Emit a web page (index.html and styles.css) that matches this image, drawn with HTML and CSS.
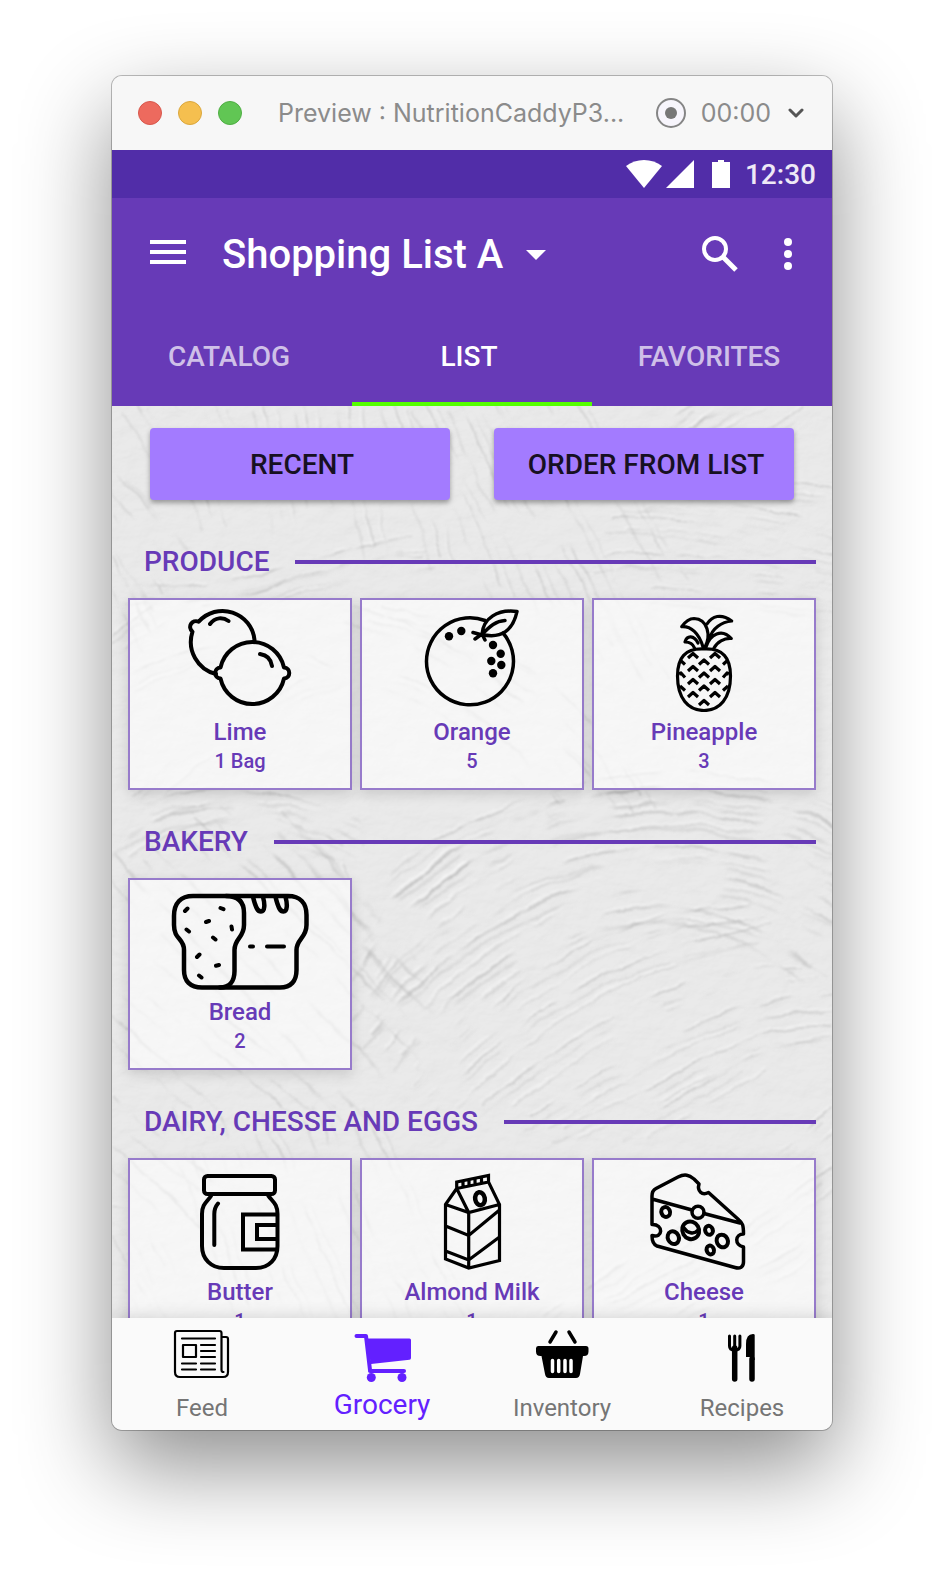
FILE: index.html
```html
<!DOCTYPE html>
<html lang="en">
<head>
<meta charset="utf-8">
<meta name="viewport" content="width=device-width, initial-scale=1">
<title>Preview : NutritionCaddyP3</title>
<link rel="stylesheet" href="styles.css">
</head>
<body>
<div class="window">
  <header class="titlebar">
    <div class="lights"><span class="light red"></span><span class="light amber"></span><span class="light green"></span></div>
    <span class="window-title">Preview : NutritionCaddyP3...</span>
    <button class="record" aria-label="Record"><span class="record-dot"></span></button>
    <span class="timer">00:00</span>
    <button class="plain" aria-label="More recording options"><svg width="16" height="12" viewBox="0 0 16 12" fill="none" stroke="#555" stroke-width="3" stroke-linecap="round" stroke-linejoin="round"><path d="M2 3l6 6 6-6"/></svg></button>
  </header>

  <div class="statusbar">
    <svg width="104" height="28" viewBox="0 0 104 28" fill="#fff"><path d="M0 6C10-2 26-2 36 6L18 28z"/><path d="M68 0v28H40z"/><path d="M92 0h6v2h6v26H86V2h6z"/></svg>
    <span>12:30</span>
  </div>

  <div class="appbar">
    <div class="toolbar">
      <button class="plain" aria-label="Menu"><svg width="36" height="28" viewBox="0 0 36 28" fill="#fff"><path d="M0 0h36v4H0zM0 10h36v4H0zM0 20h36v4H0z"/></svg></button>
      <h1 class="list-title"><button class="plain list-picker">Shopping List A<svg width="20" height="10" viewBox="0 0 20 10" fill="#fff"><path d="M0 0h20L10 10z"/></svg></button></h1>
      <button class="plain" aria-label="Search"><svg width="36" height="36" viewBox="0 0 36 36" fill="none" stroke="#fff" stroke-width="4"><circle cx="13" cy="13" r="11"/><path d="M21 21l13 13" stroke-width="5"/></svg></button>
      <button class="plain" aria-label="More options"><svg width="8" height="34" viewBox="0 0 8 34" fill="#fff"><circle cx="4" cy="5" r="4"/><circle cx="4" cy="17" r="4"/><circle cx="4" cy="29" r="4"/></svg></button>
    </div>
    <nav class="tabs">
      <a class="tab" href="#catalog">CATALOG</a>
      <a class="tab selected" href="#list" aria-current="page">LIST</a>
      <a class="tab" href="#favorites">FAVORITES</a>
    </nav>
  </div>

  <main class="content">
    <svg class="plaster" viewBox="0 0 720 912" preserveAspectRatio="xMidYMid slice" aria-hidden="true">
      <defs>
        <filter id="rough" x="-5%" y="-5%" width="110%" height="110%">
          <feTurbulence type="fractalNoise" baseFrequency=".03" numOctaves="4" seed="7" result="n"/>
          <feDisplacementMap in="SourceGraphic" in2="n" scale="9" xChannelSelector="R" yChannelSelector="G" result="d"/>
          <feTurbulence type="fractalNoise" baseFrequency=".02" numOctaves="3" seed="11"/>
          <feColorMatrix values="0 0 0 0 0  0 0 0 0 0  0 0 0 0 0  5 0 0 0 -2" result="m"/>
          <feComposite in="d" in2="m" operator="in"/>
          <feGaussianBlur stdDeviation=".9"/>
        </filter>
        <filter id="grain" x="0" y="0" width="100%" height="100%">
          <feTurbulence type="fractalNoise" baseFrequency=".04 .06" numOctaves="5" seed="3"/>
          <feDiffuseLighting surfaceScale="2" lighting-color="#fff" diffuseConstant="1.05"><feDistantLight azimuth="235" elevation="62"/></feDiffuseLighting>
        </filter>
        <g id="strokes">
          <path d="M20-10L70 70M60-10L100 110M100-10L130 60M150-10L172 120M190-10L205 90M235-10L262 140M280-10L330 150M310-10L390 180M345-10L440 200M380-10L500 240M400-10L540 260M430-10L470 60M460-10L560 160M590-10L500 60M640-10L540 40M690 0L600 60"/>
          <path d="M500 110C580 110 650 130 730 150M520 90C600 86 660 110 730 116M490 150C570 140 650 160 730 170M560 70C620 60 680 84 730 80M540 180C610 190 660 180 730 200"/>
          <path d="M0 60L60 130M0 110L50 190M0 150L40 230M20 180C110 190 190 150 300 130M90 200C150 190 220 150 310 150M0 230L40 200"/>
          <path d="M240 200C340 220 430 300 490 390M270 200C370 220 470 280 530 390M240 260C330 270 400 330 450 400M10 270C80 240 150 220 220 260M20 390C100 320 180 270 240 260"/>
          <path stroke-width="3" d="M250 560C340 420 560 350 740 460M250 600C360 450 560 390 740 490M260 630C370 490 570 400 740 530M260 520C350 400 560 330 740 430M290 650C390 520 560 440 700 560M0 440C80 380 150 400 230 440M0 420C60 370 150 370 260 420"/>
          <path d="M270 480C360 380 600 320 740 410M300 680C400 570 500 500 640 500M330 690C430 590 520 540 660 520M370 700C450 640 550 560 690 560M420 710C520 650 600 590 720 590M450 720C560 680 640 610 720 620M520 720L640 650"/>
          <path d="M80 410L320 640M110 400L310 600M140 400L300 570M170 405L290 540M40 440L280 680M0 450L240 700M0 520L210 690M0 560L170 700M230 460L270 520M0 610L90 690"/>
          <path d="M0 690L120 790M0 740L90 820M60 700L140 910M110 710L190 910M150 710L240 910M200 700L300 910M250 700L350 910M0 800C30 800 40 840 50 860M0 830L40 900M430 910C520 850 620 800 720 700M470 910C580 860 640 820 720 760M560 910C620 880 680 850 720 810"/>
        </g>
      </defs>
      <rect width="720" height="912" fill="#e7e7e7"/>
      <rect width="720" height="912" filter="url(#grain)" opacity=".15"/>
      <g filter="url(#rough)" fill="none" stroke-width="2">
        <g stroke="#fff" stroke-opacity=".35"><use href="#strokes" x="-2" y="-2"/><use href="#strokes" x="13" y="11"/></g>
        <g stroke="#aaa" stroke-opacity=".42"><use href="#strokes"/></g>
        <g stroke="#aaa" stroke-opacity=".26"><use href="#strokes" x="15" y="13"/><use href="#strokes" x="-9" y="16"/></g>
      </g>
    </svg>

    <div class="actions">
      <button class="action">RECENT</button>
      <button class="action">ORDER FROM LIST</button>
    </div>

    <section class="aisle">
      <h2 class="aisle-title">PRODUCE</h2>
      <div class="cards">
        <article class="card">
          <svg class="food" viewBox="0 0 140 104" stroke-width="4"><path d="M84.500 32A32 32 0 0 0 28.700 13.700C22 11 17 19 22.500 23.700A33 33 0 0 0 46 66M40 16C45 9 53 9 58.500 13M90 46C97 47 101 51 102 58"/><path d="M50.500 59.500A32.500 32.500 0 0 1 114 59.500C121 60 121 70 114 70.500A32.500 32.500 0 0 1 50.500 70.500C43.500 70 43.500 60 50.500 59.500z"/></svg>
          <h3 class="name">Lime</h3><p class="qty">1 Bag</p>
        </article>
        <article class="card">
          <svg class="food" viewBox="0 0 140 104" stroke-width="3.500"><path d="M83 12.500A43.500 43.500 0 1 0 101 25"/><path d="M80 26.500C81 10 96 1 115 3.500C111 22 100 31 80 26.500C88 18 94 13 103 12.500M71 24.500L82 27.500M73 31L80 26L83 32"/><g fill="#000" stroke="none"><circle cx="47" cy="28.300" r="4.200"/><circle cx="59.300" cy="23" r="4.200"/><circle cx="91" cy="37" r="4.200"/><circle cx="98.700" cy="45.700" r="4.200"/><circle cx="89.300" cy="53" r="4.200"/><circle cx="99.300" cy="57" r="4.200"/><circle cx="91" cy="65.300" r="4.200"/></g></svg>
          <h3 class="name">Orange</h3><p class="qty">5</p>
        </article>
        <article class="card">
          <svg class="food" viewBox="0 0 140 104" stroke-width="3.200"><path d="M70 41C89 40 96.500 50 96.500 68C96.500 90 86 102.500 70 102.500C54 102.500 43.500 90 43.500 68C43.500 50 51 40 70 41z"/><path d="M71 39C77 28 74 11 60 10.500C55 10.500 51 14 47.700 18.700C57 18 65 25 69 39M73 16C78 8 87 5 97.700 13C88 14 78 20 75.500 31M64 35C60 27 53 27 51 34C56 34 59 36 60.500 40M72 39C76 26 88 20 97.300 30.500C90 30 83 34 80 40"/><path stroke-linecap="butt" d="M54 50l5-4.500 5 4.500M76 50l5-4.500 5 4.500M46 52l5 4.500M65 56.500l5-4.500 5 4.500M94 52l-5 4.500M54 63l5-4.500 5 4.500M76 63l5-4.500 5 4.500M45 66l2-1 4 4.500M65 69.500l5-4.500 5 4.500M95 66l-2-1-4 4.500M54 76l5-4.500 5 4.500M76 76l5-4.500 5 4.500M46 78l5 4.500M65 82.500l5-4.500 5 4.500M94 78l-5 4.500M54 89l5-4.500 5 4.500M76 89l5-4.500 5 4.500M65 97l5-4.500 5 4.500"/></svg>
          <h3 class="name">Pineapple</h3><p class="qty">3</p>
        </article>
      </div>
    </section>

    <section class="aisle">
      <h2 class="aisle-title">BAKERY</h2>
      <div class="cards">
        <article class="card">
          <svg class="food" viewBox="0 0 140 104" stroke-width="4.500"><path d="M23 8H56C68 8 74 14 74 25V37C74 50 64.500 50 64.500 62V83C64.500 94 59 99.500 50 99.500H32C20 99.500 14 93 14 82V62C14 50 4 52 4 37V28C4 15 11 8 23 8z"/><path d="M56 8H118C130 8 136.500 15 136.500 27V37C136.500 50 126.500 51 126.500 62V82C126.500 93 121 99.500 110 99.500H50M83 9C86 21 88 23.500 91 23.500C95 23.500 95 16 93 9M105.500 9C108.500 21 110.500 23.500 113.500 23.500C117.500 23.500 117.500 16 115.500 9"/><path stroke-width="4" d="M80 58.500h3M97 58.500h17M15 23l2.500-2.500M50.500 20l3 1.200M36 34l3-1M16.500 41.500l2.500 2M61.500 38.500l.5 3M43 49.500l2.500 2M27 69l2.500-2.500M46 77.700l3-.7M29 87.500l2.500 2"/></svg>
          <h3 class="name">Bread</h3><p class="qty">2</p>
        </article>
      </div>
    </section>

    <section class="aisle">
      <h2 class="aisle-title">DAIRY, CHESSE AND EGGS</h2>
      <div class="cards">
        <article class="card">
          <svg class="food" viewBox="0 0 140 104" stroke-width="4"><rect x="34" y="8" width="71" height="18" rx="3.500"/><path d="M41 28C37 34 32 36 32 46V78C32 91 41 100 54 100H86C99 100 107.500 91 107.500 78V46C107.500 36 103 34 98.500 28M48 35.500C45 39 44.300 41 44.300 46V77"/><path stroke-linejoin="miter" stroke-linecap="butt" d="M107 46.500H73V81.500H107M107 57H87V71H107"/></svg>
          <h3 class="name">Butter</h3><p class="qty">1</p>
        </article>
        <article class="card">
          <svg class="food" viewBox="0 0 140 104" stroke-width="3.200"><path stroke-linejoin="miter" d="M43.500 36.500L54.700 20.500V14L86.500 7.500V14L97.500 36.500V92.500L66.700 100L43.500 91zM43.500 36.500L66.700 44.500L97.500 36.500M66.700 44.500V100M54.700 20.500L66.700 44.500M54.700 20.500L86.500 14M61 13v6M67 12v6M73 10.500v6M79.500 9.500v6M43.500 58L66.700 67.500L97.500 42M43.500 83L66.700 92L97.500 69"/><ellipse cx="78" cy="30.700" rx="4.800" ry="6.500" stroke-width="4.500" transform="rotate(-10 78 30.700)"/></svg>
          <h3 class="name">Almond Milk</h3><p class="qty">1</p>
        </article>
        <article class="card">
          <svg class="food" viewBox="0 0 140 104" stroke-width="3.500"><path d="M18 56.500V28C18 24 19 22 22 20.500L44 9C51 5.500 55 7 60 11L65 16C63 23 68 28 74.500 24.500L105 52C108.500 55 109.500 57 109.500 66C101 66 100 77 109.500 79V94C109.500 99 106 101 101 99.500L23 78C19 76.500 18 73 18 67.500C29 71 30 56 18 56.500zM18 31L58 42M70 45.500L106 55"/><g stroke-width="4"><ellipse cx="31.700" cy="44" rx="4.300" ry="5" transform="rotate(-20 31.700 44)"/><ellipse cx="39.300" cy="69.700" rx="5.500" ry="6.500" transform="rotate(-25 39.300 69.700)"/><ellipse cx="56.700" cy="62.300" rx="8.300" ry="9" transform="rotate(-30 56.700 62.300)"/><ellipse cx="75" cy="62.300" rx="3.800" ry="4.500" transform="rotate(-20 75 62.300)"/><ellipse cx="88.300" cy="73" rx="5.500" ry="6.500" transform="rotate(-25 88.300 73)"/><ellipse cx="76.300" cy="82" rx="3.600" ry="4.500" transform="rotate(-20 76.300 82)"/></g><circle cx="64" cy="44.300" r="6"/><path d="M50 60C53 65 60 67 64 62"/></svg>
          <h3 class="name">Cheese</h3><p class="qty">1</p>
        </article>
      </div>
    </section>
  </main>

  <nav class="bottom-nav">
    <a class="nav-item" href="#feed">
      <svg class="nav-icon" viewBox="0 0 60 56" fill="none" stroke="#000" stroke-width="2.200" stroke-linecap="round" stroke-linejoin="round"><path d="M49.500 9h4.500q2 0 2 2v33q0 5-5 5H8q-5 0-5-5V5q0-2 2-2h42.500q2 0 2 2v37q0 2 2 2"/><path d="M10 10.500h33M11 17h13v12H11zM29 17h14M29 23h14M29 29h14M10 35.500h14M29 35.500h14M10 41.500h14M29 41.500h14"/></svg>
      <span>Feed</span>
    </a>
    <a class="nav-item active" href="#grocery" aria-current="page">
      <svg class="nav-icon" viewBox="0 0 60 56" fill="#6320ff" stroke="#6320ff"><path d="M4.500 8H14L18 42" fill="none" stroke-width="4" stroke-linecap="round" stroke-linejoin="round"/><path d="M14 10.500H57.500q1.500 0 1.500 1.500V30q0 1.500-1.500 1.700L19 36z" stroke="none"/><path d="M18 43H52" stroke-width="4" stroke-linecap="round"/><circle cx="19.300" cy="49.500" r="4.500" stroke="none"/><circle cx="50" cy="49.500" r="4.500" stroke="none"/></svg>
      <span>Grocery</span>
    </a>
    <a class="nav-item" href="#inventory">
      <svg class="nav-icon" viewBox="0 0 60 56"><path d="M24 4l-6 10M37 4l6 10" stroke="#000" stroke-width="3.500" stroke-linecap="round"/><path d="M6 18h48q2.500 0 2.500 2.500v3q0 4.500-4.500 4.500h-1L48 46q-.7 4-4 4H17q-3.300 0-4-4L9.500 28H8.500Q4 28 4 23.500v-3Q4 18 6 18z"/><path d="M20.500 32.500v11M26.700 32.500v11M33 32.500v11M39 32.500v11" stroke="#fff" stroke-width="3.500" stroke-linecap="round"/></svg>
      <span>Inventory</span>
    </a>
    <a class="nav-item" href="#recipes">
      <svg class="nav-icon" viewBox="0 0 60 56"><path d="M17.500 8v10q0 4 5.200 4t5.200-4V8M22.700 8v13" fill="none" stroke="#000" stroke-width="3" stroke-linecap="round"/><path d="M22.700 20v31M40 31v20" stroke="#000" stroke-width="5.500" stroke-linecap="round"/><path d="M42.700 7v25H38v-3h-4V16Q34 6 41 6q1.700 0 1.700 1z"/></svg>
      <span>Recipes</span>
    </a>
  </nav>
</div>
</body>
</html>
```

FILE: styles.css
```css
* { box-sizing: border-box; }

body {
  margin: 0;
  height: 100vh;
  padding: 76px 112px 148px;
  background: #fff;
  font-family: Roboto, "Liberation Sans", sans-serif;
}

button { font-family: inherit; }
svg { display: block; flex: none; }
a { text-decoration: none; }

.window {
  height: 100%;
  display: flex;
  flex-direction: column;
  border-radius: 10px;
  overflow: hidden;
  background: #fafafa;
  box-shadow: 0 0 0 1px rgba(0, 0, 0, .25), 0 36px 90px rgba(0, 0, 0, .45);
}

.plain {
  padding: 0;
  border: 0;
  background: none;
  color: inherit;
}

/* Desktop window chrome */
.titlebar {
  flex: none;
  display: flex;
  align-items: center;
  height: 74px;
  padding: 0 28px 0 26px;
  background: #f7f7f7;
  color: #8b8b8b;
  font-family: Inter, "Liberation Sans", sans-serif;
  font-size: 25px;
}
.lights { display: flex; gap: 16px; margin-right: 36px; }
.light { width: 24px; height: 24px; border-radius: 50%; border: 1px solid; }
.red { background: #ed6a5e; border-color: #d8574c; }
.amber { background: #f5bf4f; border-color: #dba73c; }
.green { background: #61c654; border-color: #4fae43; }
.window-title { flex: 1; min-width: 0; white-space: nowrap; }
.record {
  display: flex;
  align-items: center;
  justify-content: center;
  flex: none;
  width: 30px;
  height: 30px;
  margin-right: 15px;
  padding: 0;
  border: 2px solid #858585;
  border-radius: 50%;
  background: #f7f5fc;
}
.record-dot { width: 12px; height: 12px; border-radius: 50%; background: #777; }
.timer { margin-right: 17px; }

/* Device status bar */
.statusbar {
  flex: none;
  display: flex;
  align-items: center;
  justify-content: flex-end;
  gap: 15px;
  height: 48px;
  padding-right: 16px;
  background: #512da8;
  color: #eee9f6;
  font-size: 28px;
  font-weight: 500;
}

.appbar { flex: none; background: #673ab7; color: #fff; }
.toolbar {
  display: flex;
  align-items: center;
  height: 112px;
  padding: 0 40px 0 38px;
}
.list-title { flex: 1; margin: 0 0 0 36px; font-size: 40px; font-weight: 500; }
.list-picker {
  display: flex;
  align-items: center;
  gap: 23px;
  padding-top: 2px;
  font-size: 40px;
  font-weight: 500;
  line-height: 48px;
}
.toolbar > .plain:last-child { margin-left: 46px; }

.tabs { display: grid; grid-template-columns: repeat(3, 1fr); height: 96px; }
.tab {
  display: flex;
  align-items: center;
  justify-content: center;
  padding-right: 6px;
  border-bottom: 4px solid transparent;
  color: #cfc0e8;
  font-size: 28px;
  font-weight: 500;
}
.selected { color: #fff; border-color: #5f0; }

/* Shopping list */
.content {
  position: relative;
  flex: 1;
  min-height: 0;
  overflow: hidden;
  background: #e6e6e6;
}
.plaster { position: absolute; inset: 0; width: 100%; height: 100%; }

.actions {
  position: relative;
  display: grid;
  grid-template-columns: 1fr 1fr;
  gap: 44px;
  padding: 22px 38px 10px;
}
.action {
  height: 72px;
  padding: 0 0 0 4px;
  border: 0;
  border-radius: 4px;
  background: #a37bff;
  color: #171022;
  font-size: 28px;
  font-weight: 500;
  box-shadow: 0 3px 5px rgba(0, 0, 0, .35);
}

.aisle { position: relative; padding: 32px 16px 0; }
.aisle-title {
  display: flex;
  align-items: center;
  gap: 26px;
  margin: 0 0 16px;
  padding-left: 16px;
  color: #673ab7;
  font-size: 28px;
  font-weight: 500;
  line-height: 40px;
}
.aisle-title::after { content: ""; flex: 1; height: 4px; background: #673ab7; }

.cards { display: grid; grid-template-columns: repeat(3, 1fr); gap: 8px; }
.card {
  display: flex;
  flex-direction: column;
  align-items: center;
  height: 192px;
  padding-top: 8px;
  border: 2px solid #977bcb;
  background: rgba(255, 255, 255, .6);
  color: #673ab7;
  box-shadow: 0 4px 12px rgba(0, 0, 0, .14);
}
.food {
  width: 140px;
  height: 104px;
  margin-bottom: 4px;
  fill: none;
  stroke: #000;
  stroke-linecap: round;
  stroke-linejoin: round;
}
.name { margin: 0; font-size: 24px; font-weight: 500; line-height: 32px; }
.qty { margin: 0; font-size: 20px; font-weight: 500; line-height: 26px; }

.bottom-nav {
  position: relative;
  flex: none;
  display: grid;
  grid-template-columns: repeat(4, 1fr);
  height: 112px;
  padding-top: 10px;
  background: #fafafa;
  box-shadow: 0 0 16px rgba(0, 0, 0, .16);
}
.nav-item {
  display: flex;
  flex-direction: column;
  align-items: center;
  gap: 8px;
  color: #757575;
  font-size: 24px;
  line-height: 32px;
}
.nav-icon { width: 60px; height: 56px; }
.active { gap: 5px; color: #6320ff; font-size: 28px; }
```
